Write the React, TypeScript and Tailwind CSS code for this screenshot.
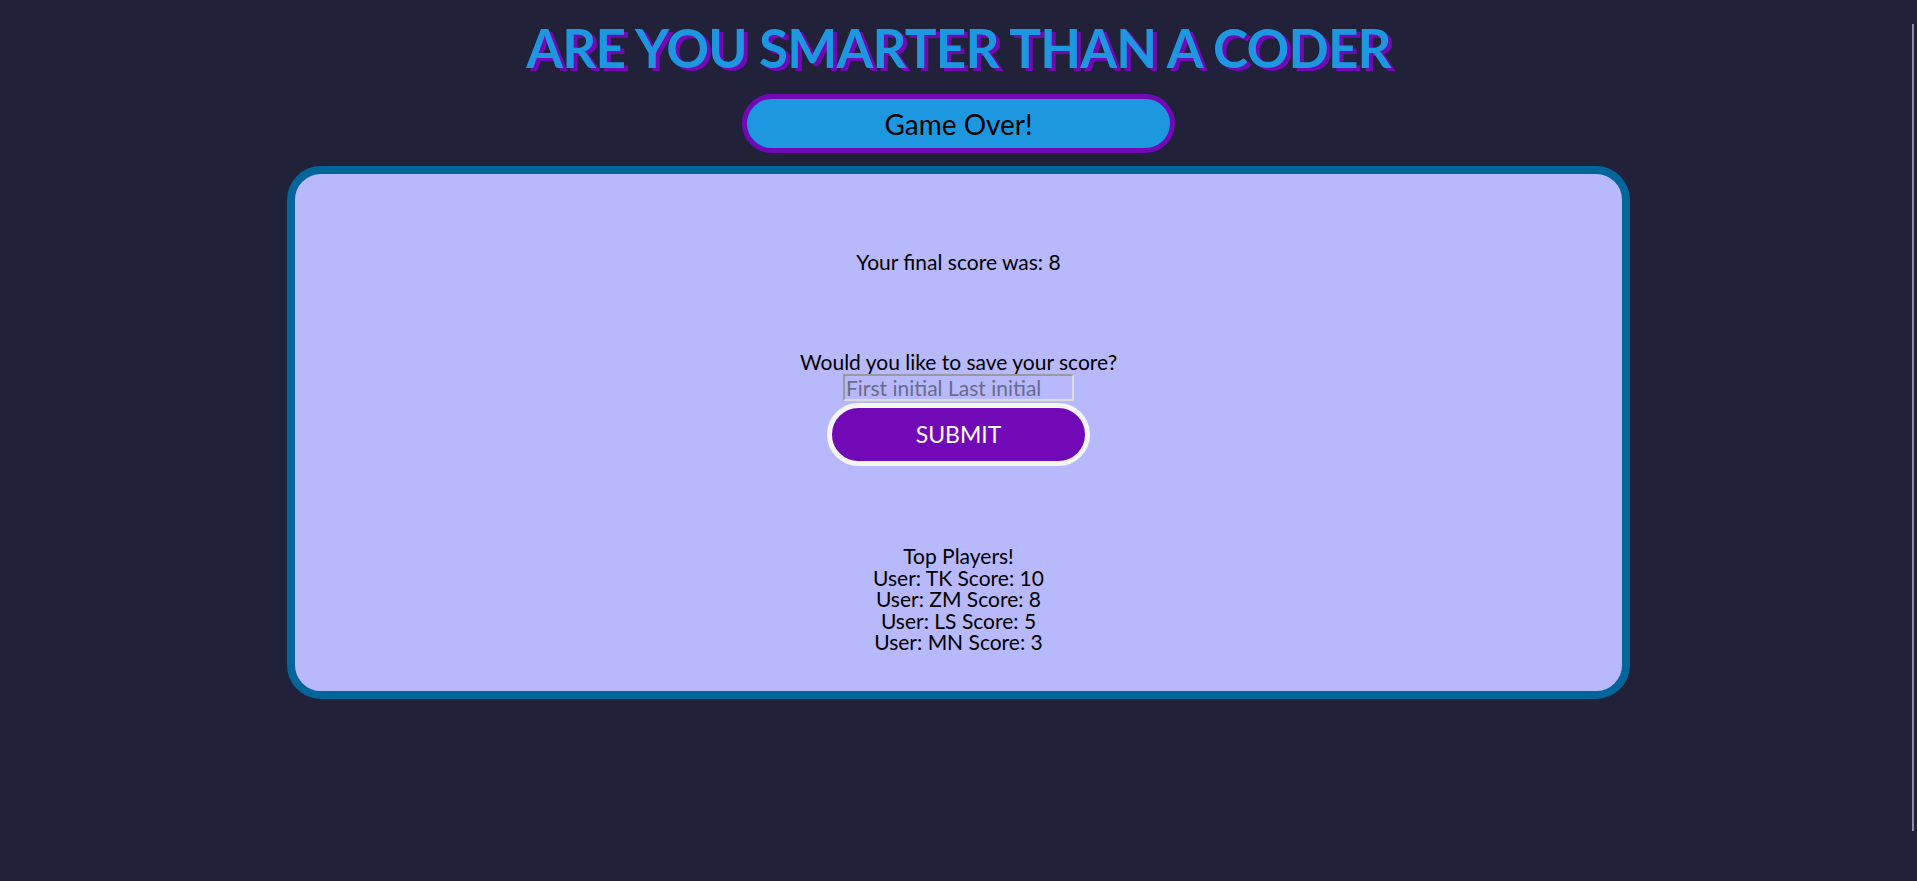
const players = [
  { user: "TK", score: 10 },
  { user: "ZM", score: 8 },
  { user: "LS", score: 5 },
  { user: "MN", score: 3 },
];

const App = () => {
  return (
    <div className="relative w-full h-[881px] overflow-hidden bg-[#212139] flex flex-col items-center font-['Lato',sans-serif]">
      <h1 className="mt-[18px] text-[53px] leading-[60px] tracking-[-0.8px] font-bold uppercase text-[#1d98e0] [text-shadow:4px_3px_0_#7209b7]">
        Are You Smarter Than A Coder
      </h1>

      <div className="mt-[16px] w-[433px] h-[59px] rounded-full border-[5px] border-[#7209b7] bg-[#1d98e0] flex items-center justify-center text-[28px] text-black">
        Game Over!
      </div>

      <div className="mt-[13px] w-[1343px] rounded-[34px] border-[8px] border-[#02669a] bg-[#b8b8fd] flex flex-col items-center pt-[77px] pb-[38px] text-[21px] leading-[21px] text-black">
        <p>Your final score was: 8</p>

        <p className="mt-[79px]">Would you like to save your score?</p>
        <input
          type="text"
          placeholder="First initial Last initial"
          className="mt-[2px] w-[231px] h-[27px] px-[1px] bg-transparent border-2 border-t-[#9a9a9a] border-l-[#9a9a9a] border-b-[#dcdcdc] border-r-[#dcdcdc] text-[21px] placeholder:text-[#6b6b8a] outline-none"
        />
        <button className="mt-[2px] w-[263px] h-[63px] rounded-full border-[5px] border-[#f5f5f5] bg-[#7209b7] text-white text-[23px] uppercase">
          Submit
        </button>

        <div className="mt-[79px] flex flex-col items-center leading-[21.5px]">
          <p>Top Players!</p>
          {players.map((p) => (
            <p key={p.user}>
              User: {p.user} Score: {p.score}
            </p>
          ))}
        </div>
      </div>

      <div className="absolute right-[3px] top-[24px] w-[2px] h-[807px] bg-[#8a8fa5]" />
    </div>
  );
};

export default App;
